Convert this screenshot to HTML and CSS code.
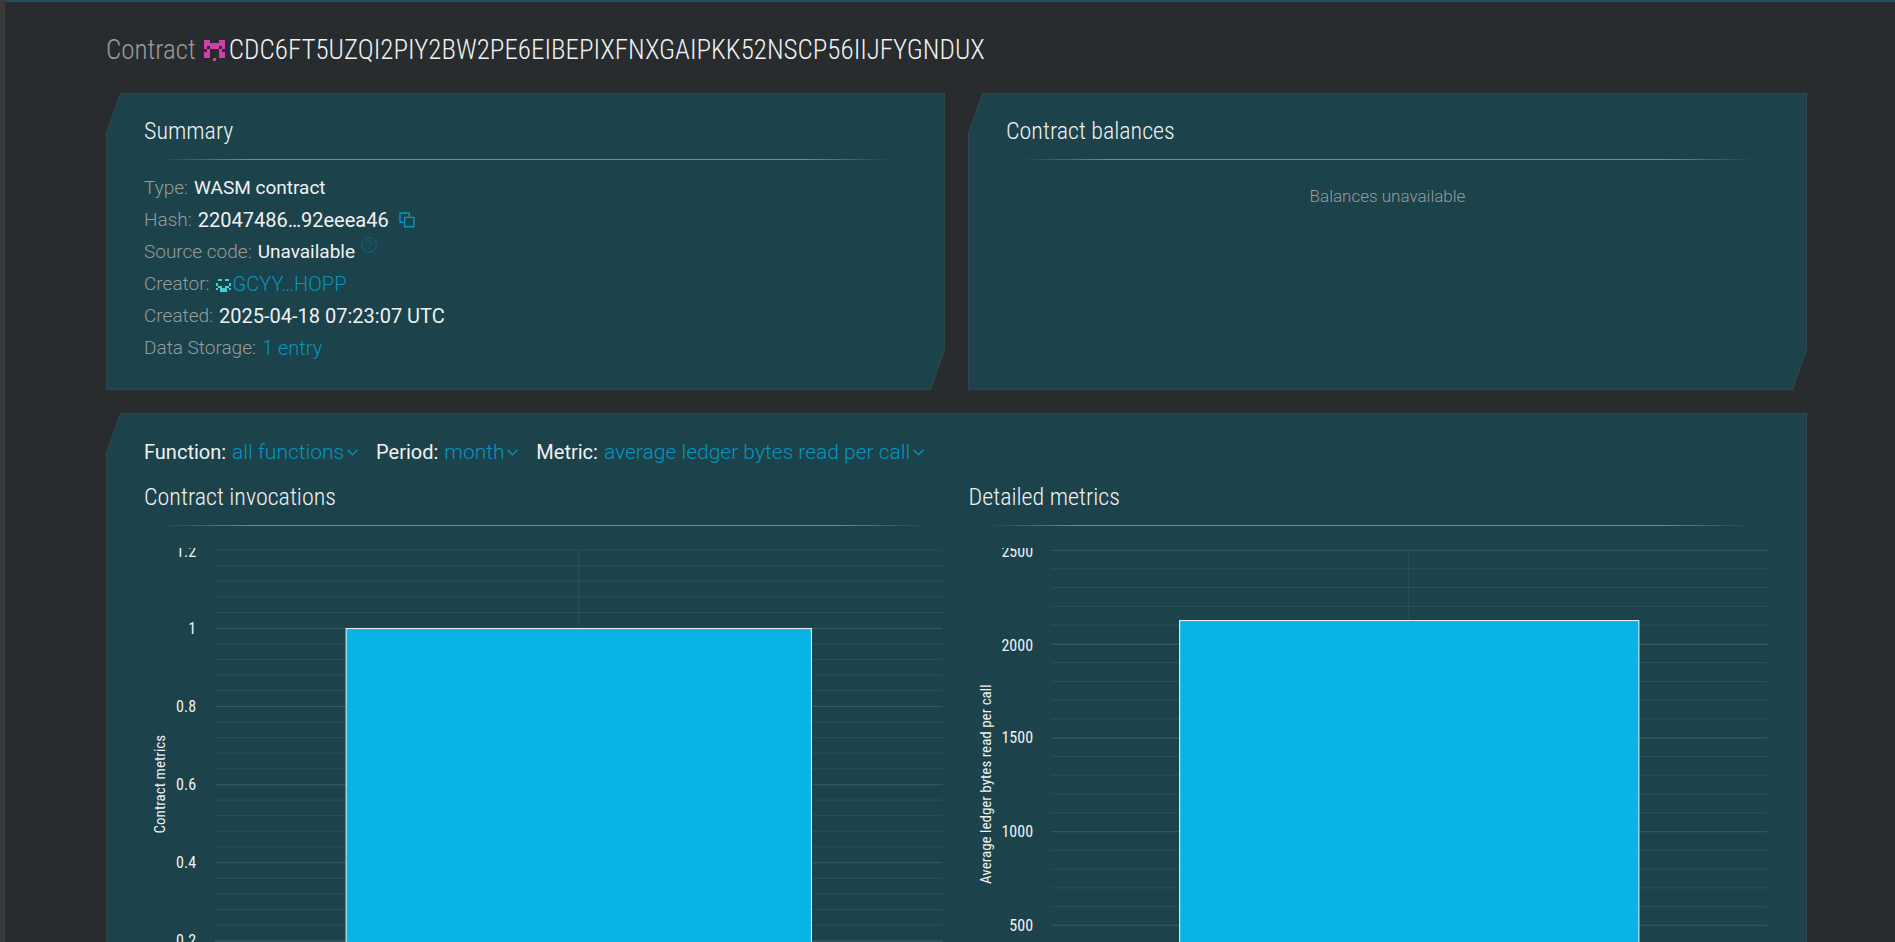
FILE: index.html
```html
<!DOCTYPE html>
<html lang="en">
<head>
<meta charset="utf-8">
<title>Contract CDC6FT5U…YGNDUX</title>
<link rel="stylesheet" href="styles.css">
</head>
<body>
<main class="page">
  <h1 class="title"><span class="dim">Contract</span>
    <svg class="identicon" viewBox="0 0 7 7" shape-rendering="crispEdges" aria-hidden="true"><path fill="#d13fa9" d="M0 0h2v1h-2zM5 0h2v1h-2zM0 1h7v1h-7zM0 2h1v1h-1zM2 2h3v1h-3zM6 2h1v1h-1zM1 3h1v1h-1zM5 3h1v1h-1zM0 4h2v2h-2zM5 4h2v2h-2zM3 6h1v1h-1z"/></svg>
    <span>CDC6FT5UZQI2PIY2BW2PE6EIBEPIXFNXGAIPKK52NSCP56IIJFYGNDUX</span>
  </h1>

  <div class="cards">
    <section class="panel">
      <h2 class="heading">Summary</h2>
      <dl class="facts">
        <div class="fact"><dt>Type:</dt><dd>WASM contract</dd></div>
        <div class="fact"><dt>Hash:</dt><dd class="figure">22047486…92eeea46</dd>
          <dd><button class="copy" type="button" aria-label="Copy hash"><svg width="16" height="16" viewBox="0 0 16 16" fill="none" stroke="currentColor" stroke-width="1.4"><path d="M4.5 10.3H1V1h9.3v3.4M5.6 5.4h9.3v9.3H5.6z"/></svg></button></dd></div>
        <div class="fact"><dt>Source code:</dt><dd>Unavailable</dd>
          <dd><a class="help" href="#source" aria-label="About source code"><svg width="16" height="16" viewBox="0 0 16 16" fill="none" stroke="currentColor"><circle cx="8" cy="8" r="7.3"/><path d="M5.8 6.2c0-3 4.500-3 4.500-.2 0 1.700-2.200 1.700-2.200 3.700M8.100 11v1.400"/></svg></a></dd></div>
        <div class="fact"><dt>Creator:</dt><dd class="figure"><a class="link account" href="#creator"><svg class="identicon-small" viewBox="0 0 7 7" shape-rendering="crispEdges" aria-hidden="true"><path fill="#3fd1cf" d="M1 1h2v1h-2zM4 1h2v1h-2zM0 3h1v1h-1zM6 3h1v1h-1zM1 4h2v1h-2zM4 4h2v1h-2zM0 5h1v1h-1zM2 5h3v1h-3zM6 5h1v1h-1zM2 6h3v1h-3z"/></svg>GCYY…HOPP</a></dd></div>
        <div class="fact"><dt>Created:</dt><dd class="figure">2025-04-18 07:23:07 UTC</dd></div>
        <div class="fact"><dt>Data Storage:</dt><dd class="figure"><a class="link" href="#storage">1 entry</a></dd></div>
      </dl>
    </section>
    <section class="panel">
      <h2 class="heading">Contract balances</h2>
      <p class="empty">Balances unavailable</p>
    </section>
  </div>

  <section class="panel stats">
    <form class="filters">
      <label class="filter">Function: <span class="pick"><select><option>all functions</option></select><svg class="chevron" viewBox="0 0 10 6"><path d="M.5.5 5 5l4.500-4.500"/></svg></span></label>
      <label class="filter">Period: <span class="pick"><select><option>month</option></select><svg class="chevron" viewBox="0 0 10 6"><path d="M.5.5 5 5l4.500-4.500"/></svg></span></label>
      <label class="filter">Metric: <span class="pick"><select><option>average ledger bytes read per call</option></select><svg class="chevron" viewBox="0 0 10 6"><path d="M.5.5 5 5l4.500-4.500"/></svg></span></label>
    </form>
    <div class="charts">
      <div>
        <h2 class="heading">Contract invocations</h2>
        <svg class="chart" viewBox="0 0 800 520" role="img" aria-label="Contract invocations">
          <defs><pattern id="minor-a" x="71" y="1.5" width="727" height="15.62" patternUnits="userSpaceOnUse"><path class="minor" d="M0 .5h727"/></pattern></defs>
          <rect x="71" y="1.5" width="727" height="470" fill="url(#minor-a)"/>
          <path class="major" d="M71 80.500h727M71 158.500h727M71 236.500h727M71 314.500h727M71 393h727M71 471h727"/>
          <path class="minor" d="M434.500 2v469"/>
          <rect class="bar" x="202" y="80.5" width="465" height="390"/>
          <g class="tick"><text x="52" y="9">1.2</text><text x="52" y="86">1</text><text x="52" y="164">0.8</text><text x="52" y="242">0.6</text><text x="52" y="320">0.4</text><text x="52" y="398">0.2</text><text x="52" y="476">0</text></g>
          <text class="axis" transform="translate(21 236) rotate(-90)">Contract metrics</text>
        </svg>
      </div>
      <div>
        <h2 class="heading">Detailed metrics</h2>
        <svg class="chart" viewBox="0 0 800 520" role="img" aria-label="Detailed metrics">
          <defs><pattern id="minor-b" x="82" y="1.5" width="716" height="18.76" patternUnits="userSpaceOnUse"><path class="minor" d="M0 .5h716"/></pattern></defs>
          <rect x="82" y="1.5" width="716" height="470" fill="url(#minor-b)"/>
          <path class="major" d="M82 2.500h716M82 96.500h716M82 190h716M82 283.500h716M82 377h716M82 471h716"/>
          <path class="minor" d="M439.500 2v469"/>
          <rect class="bar" x="210.5" y="72.5" width="459" height="398"/>
          <g class="tick"><text x="64" y="9">2500</text><text x="64" y="103">2000</text><text x="64" y="195">1500</text><text x="64" y="289">1000</text><text x="64" y="383">500</text><text x="64" y="476">0</text></g>
          <text class="axis" transform="translate(22 236) rotate(-90)">Average ledger bytes read per call</text>
        </svg>
      </div>
    </div>
  </section>
</main>
</body>
</html>
```
FILE: styles.css
```css
* { box-sizing: border-box; }

html {
  background: #282c2f;
  scrollbar-width: none;
}

body {
  margin: 0;
  border-left: 5px solid #3a3a3a;
  color: #f0f2f2;
  font: 400 20px/32px Roboto, "Liberation Sans", sans-serif;
}

.page {
  border-top: 2px solid #1c4f60;
  padding: 24px 88px 24px 101px;
}

.title {
  display: flex;
  align-items: center;
  margin: 0 0 19px;
  font: 300 27px/48px "Roboto Condensed", Roboto, sans-serif;
}

.dim { color: #999c9c; }

.identicon {
  width: 21px;
  height: 21px;
  margin: 0 4px 0 8px;
}

.cards {
  display: grid;
  grid-template-columns: 1fr 1fr;
  gap: 23px;
}

/* Panels have a slanted top-left and bottom-right corner with a thin outline. */
.panel {
  --cut: polygon(14px 0, 100% 0, 100% calc(100% - 40px), calc(100% - 14px) 100%, 0 100%, 0 40px);
  position: relative;
  z-index: 0;
  padding: 18px 38px 26px;
  background: #2f464d;
  clip-path: var(--cut);
}

.panel::before {
  content: "";
  position: absolute;
  inset: 1px;
  z-index: -1;
  background: #1c424b;
  clip-path: var(--cut);
}

.heading {
  margin: 0;
  padding-bottom: 8px;
  background: linear-gradient(to right, transparent 2%, #08b5e5 14%, #08b5e5 86%, transparent 98%) bottom / 100% 1px no-repeat;
  font: 300 24px/41px "Roboto Condensed", Roboto, sans-serif;
}

.facts { margin: 12px 0 0; }

.fact {
  display: flex;
  gap: 6px;
}

.fact dt {
  color: #999c9c;
  font-size: 19px;
  font-weight: 300;
}

.fact dd {
  margin: 0;
  font-size: 19px;
}

.fact .figure { font-size: 20px; }

.link {
  color: #0795be;
  font-weight: 300;
  text-decoration: none;
}

.account {
  display: flex;
  align-items: center;
  gap: 2px;
}

.identicon-small {
  width: 15px;
  height: 15px;
}

.copy {
  display: block;
  margin: 8px 0 0 4px;
  padding: 0;
  border: 0;
  background: none;
  color: #0795be;
}

.copy svg, .help svg { display: block; }

.help {
  display: block;
  padding-top: 1px;
  color: #12667c;
}

.empty {
  margin: 20px 0 0;
  color: #999c9c;
  font-size: 17px;
  font-weight: 300;
  text-align: center;
}

.stats { margin-top: 23px; padding-top: 23px; }

.filters {
  display: flex;
  flex-wrap: wrap;
  gap: 18px;
}

.filter {
  display: flex;
  gap: 6px;
}

.pick {
  display: flex;
  align-items: center;
  gap: 2px;
  color: #0795be;
}

.pick select {
  appearance: none;
  height: 32px;
  padding: 0;
  border: 0;
  background: none;
  color: inherit;
  font: 300 21px/32px Roboto, sans-serif;
}

.chevron {
  width: 11px;
  height: 7px;
  fill: none;
  stroke: currentColor;
  stroke-width: 1.2;
}

.charts {
  display: grid;
  grid-template-columns: 1fr 1fr;
  gap: 24px;
  margin-top: 9px;
}

.chart {
  display: block;
  width: 100%;
  margin-top: 22px;
}

.minor { fill: none; stroke: #2b5059; }

.major { fill: none; stroke: #385861; }

.bar { fill: #09b4e4; stroke: #f0f8fa; }

.tick, .axis {
  fill: #f0f2f2;
  font: 400 16px "Roboto Condensed", Roboto, sans-serif;
  text-anchor: end;
}

.axis {
  font-size: 15px;
  text-anchor: middle;
}
```
